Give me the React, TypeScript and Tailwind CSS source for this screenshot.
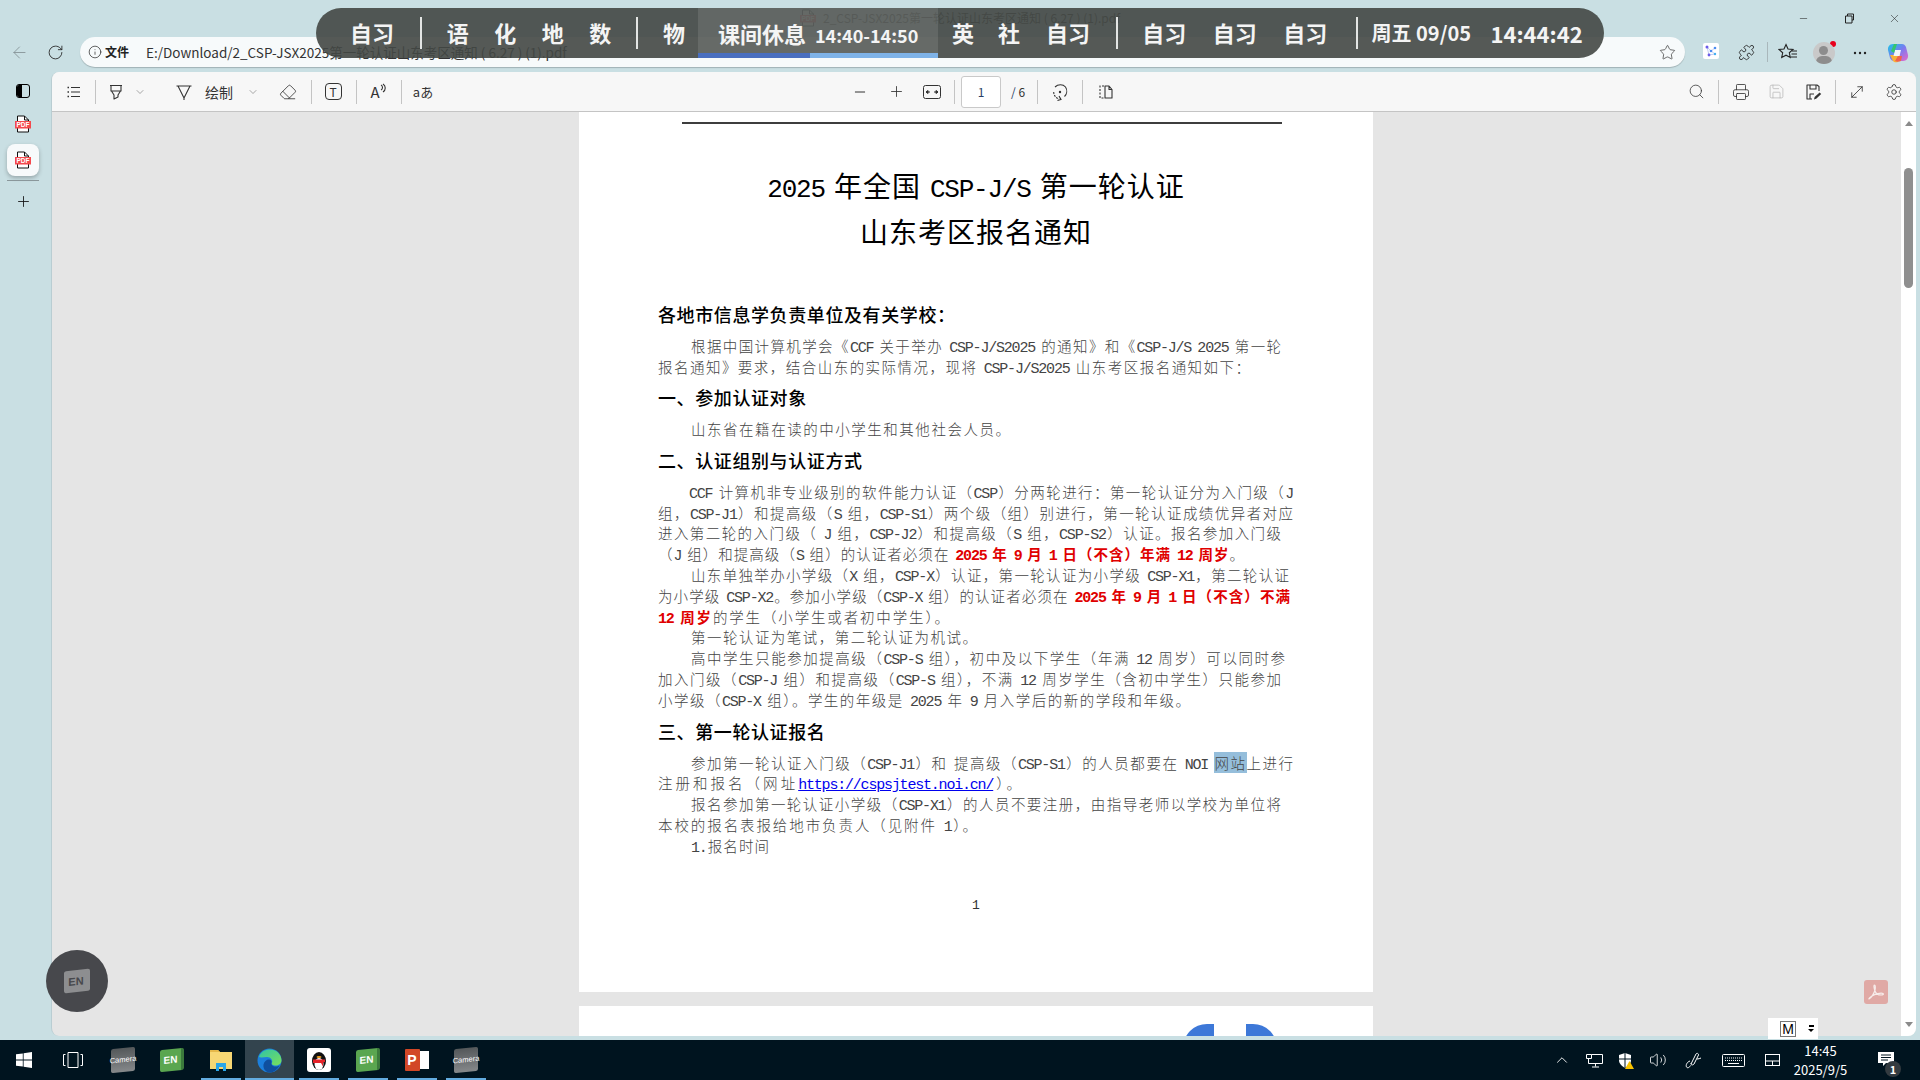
import { Children, type ReactNode } from "react";
import {
  ArrowLeft,
  ChevronDown,
  ChevronUp,
  Eraser,
  Info,
  Minus,
  MoveDiagonal,
  Plus,
  Printer,
  Puzzle,
  RotateCw,
  Save,
  Search,
  Settings,
  Star,
  Volume2,
  X,
} from "lucide-react";

const LATIN = /([\x20-\x7e]+)/;

function split(text: string) {
  return text.split(LATIN).map((part, i) =>
    i % 2 === 1 ? (
      <span
        key={i}
        className="font-['Liberation_Mono','Noto_Sans_CJK_SC',monospace] text-[15px] tracking-[-1.2px] [word-spacing:-3px]"
      >
        {part}
      </span>
    ) : (
      part
    ),
  );
}

function Ln({ x, end, children }: { x: number; end: number; children: ReactNode }) {
  // x, end are page coordinates of the line's start and end
  return (
    <div
      className="h-[20.8px] whitespace-nowrap text-[14.5px] font-light leading-[20.8px] text-[#444] [text-align-last:justify] [text-align:justify]"
      style={{ marginLeft: x - 579, width: end - x }}
    >
      {Children.map(children, (c) => (typeof c === "string" ? split(c) : c))}
    </div>
  );
}

function Red({ children }: { children: string }) {
  return <b className="font-bold text-[#e00000]">{split(children)}</b>;
}

function Heading({ className = "", children }: { className?: string; children: string }) {
  return (
    <div className={`ml-[79px] h-6 text-[18px] font-medium leading-6 tracking-[0.6px] text-black ${className}`}>
      {children}
    </div>
  );
}

function Sep({ className = "" }: { className?: string }) {
  return <div className={`h-6 w-px shrink-0 bg-[#c4c4c4] ${className}`} />;
}

function Slot({ className = "", children }: { className?: string; children: ReactNode }) {
  return <div className={`flex h-6 w-6 shrink-0 items-center justify-center text-[#333] ${className}`}>{children}</div>;
}

function Line({ d }: { d: string }) {
  return <path d={d} fill="none" stroke="currentColor" strokeWidth="1.1" strokeLinejoin="round" />;
}

function Svg({ s = 18, children }: { s?: number; children: ReactNode }) {
  return (
    <svg width={s} height={s} viewBox="0 0 18 18">
      {children}
    </svg>
  );
}

function PdfIcon() {
  return (
    <svg width="16" height="18" viewBox="0 0 16 18">
      <path d="M2.500 1h7L13.500 5v12h-11z" fill="#fff" stroke="#111" strokeWidth="1" />
      <path d="M9.500 1v4h4" fill="none" stroke="#111" strokeWidth="1" />
      <rect y="6" width="16" height="7.500" fill="#f4494d" />
      <text x="8" y="12.400" fontSize="6.500" fontWeight="700" fill="#fff" textAnchor="middle" fontFamily="Liberation Sans">
        PDF
      </text>
    </svg>
  );
}

function Rail() {
  return (
    <div className="flex w-[51px] shrink-0 flex-col items-center">
      <div className="mr-[5px] mt-[11px] flex h-4 items-center">
        <div className="flex h-[14px] w-[14px] overflow-hidden rounded-[3px] border border-black">
          <div className="w-[5px] bg-black" />
        </div>
      </div>
      <div className="mr-[5px] mt-4">
        <PdfIcon />
      </div>
      <div className="mr-[5px] mt-[11px] flex h-8 w-8 items-center justify-center rounded-lg bg-[#f7fafb] shadow-[0_2px_4px_rgba(0,0,0,0.25)]">
        <PdfIcon />
      </div>
      <div className="mr-[5px] mt-1 h-px w-8 bg-[#8a979b]" />
      <Plus size={17} strokeWidth={1.2} className="mr-[5px] mt-3 text-[#111]" />
    </div>
  );
}

function Toolbar() {
  return (
    <div className="flex h-10 shrink-0 items-center border-b border-[#c4c4c4] bg-[#f7f7f7] pl-[10px] pr-[10px]">
      <Slot>
        <Svg>
          <Line d="M6 4.500h9M6 9h9M6 13.500h9" />
          <path d="M2.500 4.500h1.500M2.500 9h1.500M2.500 13.500h1.500" stroke="currentColor" strokeWidth="1.500" />
        </Svg>
      </Slot>
      <Sep className="ml-[9px]" />
      <Slot className="ml-2">
        <Svg>
          <Line d="M3 2.500h12M4 2.500v5.500h10V2.500M4.500 8l2.500 4v4l4-2v-2l2.500-4" />
        </Svg>
      </Slot>
      <ChevronDown size={12} strokeWidth={1} className="ml-[6px] mr-[2px] text-[#555]" />
      <Slot className="ml-6">
        <Svg>
          <Line d="M1.500 3h15M3 3l6 12 6-12M9 15v2" />
        </Svg>
      </Slot>
      <span className="ml-[9px] w-7 text-[14px] leading-none text-[#333]">绘制</span>
      <ChevronDown size={12} strokeWidth={1} className="ml-[14px] mr-[2px] text-[#555]" />
      <Slot className="ml-[15px]">
        <Eraser size={18} strokeWidth={1.1} />
      </Slot>
      <Sep className="ml-[11px]" />
      <Slot className="ml-[9px]">
        <div className="flex h-[17px] w-[17px] items-center justify-center rounded-[4px] border border-[#333] text-[12px] leading-none">
          T
        </div>
      </Slot>
      <Sep className="ml-[11px]" />
      <Slot className="ml-[9px]">
        <span className="text-[15px] leading-none">A</span>
        <svg width="6" height="10" viewBox="0 0 6 10" className="-mt-2">
          <Line d="M1 2c2 1 2 4 0 5M3 1c3 2 3 6 0 8" />
        </svg>
      </Slot>
      <Sep className="ml-[11px]" />
      <Slot className="ml-[9px]">
        <span className="text-[13px] leading-none">aあ</span>
      </Slot>

      <Slot className="ml-[413px] text-[#8a8a8a]">
        <Minus size={16} strokeWidth={1.500} />
      </Slot>
      <Slot className="ml-3">
        <Plus size={17} strokeWidth={1.2} />
      </Slot>
      <Slot className="ml-3">
        <svg width="18" height="14" viewBox="0 0 18 14" fill="none" stroke="currentColor">
          <rect x=".5" y=".5" width="17" height="13" rx="2" />
          <path d="M3 7h4M11 7h4" />
          <path d="M3 7l2-1.500v3zM15 7l-2-1.500v3z" fill="currentColor" />
        </svg>
      </Slot>
      <Sep className="ml-[10px]" />
      <div className="ml-[6px] flex h-8 w-10 shrink-0 items-center justify-center rounded-[3px] border border-[#c9c9c9] bg-white text-[12px] text-[#2a3f66]">
        1
      </div>
      <span className="ml-[10px] w-4 whitespace-nowrap text-[12px] text-[#333]">
        <span className="text-[#2a3f66]">/</span> 6
      </span>
      <Sep className="ml-[10px]" />
      <Slot className="ml-[10px]">
        <svg width="18" height="18" viewBox="0 0 18 18" fill="none" stroke="currentColor" strokeWidth="1.1">
          <path d="M4 4c3-3 8-3 10.500 0 2 3 1.500 7-1 9.500" />
          <path d="M2.700 9c0 3 2 6 5.500 7" strokeDasharray="2 1" />
          <path d="M8 13l2 3.500-3.500 1" />
          <circle cx="9" cy="9" r="1.200" fill="currentColor" stroke="none" />
        </svg>
      </Slot>
      <Sep className="ml-[10px]" />
      <Slot className="ml-[10px]">
        <Svg>
          <path d="M8 3H4v12h4" fill="none" stroke="currentColor" strokeWidth="1.1" strokeDasharray="2 1.500" />
          <Line d="M9 3h4l3 3.500V15H9zM13 3v3.500h3" />
        </Svg>
      </Slot>

      <Slot className="ml-auto">
        <Search size={17} strokeWidth={1.1} />
      </Slot>
      <Sep className="ml-[10px]" />
      <Slot className="ml-[10px]">
        <Printer size={18} strokeWidth={1.1} />
      </Slot>
      <Slot className="ml-[11px] text-[#b8b8b8]">
        <Save size={17} strokeWidth={1.1} />
      </Slot>
      <Slot className="ml-[13px]">
        <Svg>
          <Line d="M15 8V3.500L13 2H3v14h5M6 2v4h6V2M6 16v-5h4" />
          <path d="M10 16.500l.6-2.500 5-4.500 1.600 1.600-5 4.600z" fill="currentColor" />
        </Svg>
      </Slot>
      <Sep className="ml-[10px]" />
      <Slot className="ml-[9px]">
        <MoveDiagonal size={18} strokeWidth={1.1} />
      </Slot>
      <Slot className="ml-[13px]">
        <Settings size={18} strokeWidth={1.1} />
      </Slot>
    </div>
  );
}

function PdfPage() {
  return (
    <div className="h-[880px] w-[794px] shrink-0 bg-white pt-[10px] font-['Noto_Sans_CJK_SC',sans-serif]">
      <div className="ml-[103px] h-[2px] w-[600px] bg-[#3d3d3d]" />
      <div className="mt-[38px] h-[46px] text-center text-[28px] leading-[46px] tracking-[1px] text-black">
        <span className="mr-[9px] font-['Liberation_Mono',monospace] text-[26px] tracking-[-1.200px]">2025</span>年全国
        <span className="mx-[9px] font-['Liberation_Mono',monospace] text-[26px] tracking-[-1.200px]">CSP-J/S</span>第一轮认证
      </div>
      <div className="h-[46px] text-center text-[28px] leading-[46px] tracking-[1px] text-black">山东考区报名通知</div>

      <Heading className="mt-12">各地市信息学负责单位及有关学校：</Heading>
      <div className="mt-[10px]">
        <Ln x={691} end={1281}>根据中国计算机学会《CCF 关于举办 CSP-J/S2025 的通知》和《CSP-J/S 2025 第一轮</Ln>
        <Ln x={658} end={1250}>报名通知》要求，结合山东的实际情况，现将 CSP-J/S2025 山东考区报名通知如下：</Ln>
      </div>
      <Heading className="mt-[7px]">一、参加认证对象</Heading>
      <div className="mt-[10px]">
        <Ln x={691} end={1010}>山东省在籍在读的中小学生和其他社会人员。</Ln>
      </div>
      <Heading className="mt-[9px]">二、认证组别与认证方式</Heading>
      <div className="mt-[9.500px]">
        <Ln x={689} end={1293}>CCF 计算机非专业级别的软件能力认证（CSP）分两轮进行：第一轮认证分为入门级（J</Ln>
        <Ln x={658} end={1293}>组，CSP-J1）和提高级（S 组，CSP-S1）两个级（组）别进行，第一轮认证成绩优异者对应</Ln>
        <Ln x={658} end={1281}>进入第二轮的入门级（ J 组，CSP-J2）和提高级（S 组，CSP-S2）认证。报名参加入门级</Ln>
        <Ln x={658} end={1244}>
          （J 组）和提高级（S 组）的认证者必须在 <Red>2025 年 9 月 1 日（不含）年满 12 周岁</Red>。
        </Ln>
        <Ln x={691} end={1289}>山东单独举办小学级（X 组，CSP-X）认证，第一轮认证为小学级 CSP-X1，第二轮认证</Ln>
        <Ln x={658} end={1290}>
          为小学级 CSP-X2。参加小学级（CSP-X 组）的认证者必须在 <Red>2025 年 9 月 1 日（不含）不满</Red>
        </Ln>
        <Ln x={658} end={949}>
          <Red>12 周岁</Red>的学生（小学生或者初中学生）。
        </Ln>
        <Ln x={691} end={977}>第一轮认证为笔试，第二轮认证为机试。</Ln>
        <Ln x={691} end={1285}>高中学生只能参加提高级（CSP-S 组），初中及以下学生（年满 12 周岁）可以同时参</Ln>
        <Ln x={658} end={1281}>加入门级（CSP-J 组）和提高级（CSP-S 组），不满 12 周岁学生（含初中学生）只能参加</Ln>
        <Ln x={658} end={1190}>小学级（CSP-X 组）。学生的年级是 2025 年 9 月入学后的新的学段和年级。</Ln>
      </div>
      <Heading className="mt-2">三、第一轮认证报名</Heading>
      <div className="mt-[10px]">
        <Ln x={691} end={1293}>
          参加第一轮认证入门级（CSP-J1）和 提高级（CSP-S1）的人员都要在 NOI <span className="bg-[#95bedb]">网站</span>上进行
        </Ln>
        <Ln x={658} end={1021}>
          注册和报名（网址<a className="text-[#0000ee] underline">{split("https://cspsjtest.noi.cn/")}</a>）。
        </Ln>
        <Ln x={691} end={1281}>报名参加第一轮认证小学级（CSP-X1）的人员不要注册，由指导老师以学校为单位将</Ln>
        <Ln x={658} end={977}>本校的报名表报给地市负责人（见附件 1）。</Ln>
        <Ln x={691} end={769}>1.报名时间</Ln>
      </div>
      <div className="mt-[38px] h-[21px] text-center font-['Liberation_Mono',monospace] text-[13px] leading-[21px] text-[#333]">1</div>
    </div>
  );
}

function Scrollbar() {
  return (
    <div className="flex w-[15px] shrink-0 flex-col items-center bg-white">
      <div className="mt-[9px] h-0 w-0 border-x-[4.500px] border-b-[5px] border-x-transparent border-b-[#8a8a8a]" />
      <div className="mt-[42px] h-[120px] w-[9px] rounded-full bg-[#8f8f8f]" />
      <div className="mt-auto mb-[9px] h-0 w-0 border-x-[4.500px] border-t-[5px] border-x-transparent border-t-[#8a8a8a]" />
    </div>
  );
}

function Divider() {
  return <div className="h-8 w-[2px] shrink-0 bg-[#e3e5e4]" />;
}

function Cell({ w, className = "", children }: { w: string; className?: string; children: ReactNode }) {
  return <div className={`shrink-0 text-center ${w} ${className}`}>{children}</div>;
}

function Schedule() {
  return (
    <div className="absolute left-[316px] top-2 flex h-[50px] w-[1288px] items-center overflow-hidden rounded-[25px] bg-[#434744]/90 text-[22px] font-bold leading-none text-[#f4f4f4]">
      <Cell w="w-[104px]" className="pb-[2px] pl-2">自习</Cell>
      <Divider />
      <Cell w="w-[47.500px]" className="ml-3 pb-[2px]">语</Cell>
      <Cell w="w-[47.500px]" className="pb-[2px]">化</Cell>
      <Cell w="w-[47.500px]" className="pb-[2px]">地</Cell>
      <Cell w="w-[47.500px]" className="pb-[2px]">数</Cell>
      <div className="w-3 shrink-0" />
      <Divider />
      <Cell w="w-[60px]" className="pb-[2px] pl-3">物</Cell>
      <div className="relative flex h-full w-[240px] shrink-0 items-center bg-[#fff]/10 pl-5">
        <span className="w-[97px]">课间休息</span>
        <span className="mt-[3px] text-[18px]">14:40-14:50</span>
        <div className="absolute bottom-0 left-0 flex h-[5px] w-full">
          <div className="w-[112px] bg-[#4a6fc0]" />
          <div className="flex-1 bg-[#7fb3e8]" />
        </div>
      </div>
      <Cell w="w-[50px]" className="pb-[2px]">英</Cell>
      <Cell w="w-[42px]" className="pb-[2px]">社</Cell>
      <Cell w="w-[76px]" className="pb-[2px]">自习</Cell>
      <div className="w-[10px] shrink-0" />
      <Divider />
      <div className="w-[11px] shrink-0" />
      <Cell w="w-[70.500px]" className="pb-[2px]">自习</Cell>
      <Cell w="w-[70.500px]" className="pb-[2px]">自习</Cell>
      <Cell w="w-[70.500px]" className="pb-[2px]">自习</Cell>
      <div className="w-[15px] shrink-0" />
      <Divider />
      <span className="ml-[14px] w-[119px] whitespace-nowrap text-[20px]">周五 09/05</span>
      <span className="text-[22px]">14:44:42</span>
    </div>
  );
}

function BrowserTop() {
  return (
    <>
      <div className="flex h-9 items-center">
        <div className="ml-[800px] opacity-70">
          <PdfIcon />
        </div>
        <span className="ml-[7px] whitespace-nowrap text-[12px] text-[#555]">2_CSP-JSX2025第一轮认证山东考区通知 ( 6.27 ) (1).pdf</span>
        <div className="ml-auto flex items-center text-[#222]">
          <Minus size={11} strokeWidth={1.2} />
          <svg width="11" height="11" viewBox="0 0 11 11" className="ml-[35px]">
            <path d="M1.500 3h6.500v7H1.500zM3.500 3V1h6v6H8" fill="none" stroke="currentColor" />
          </svg>
          <X size={13} strokeWidth={1} className="ml-[33px] mr-[19px]" />
        </div>
      </div>
      <div className="flex h-9 items-start">
        <ArrowLeft size={19} strokeWidth={1} className="ml-[10px] mt-[7px] shrink-0 text-[#7d8a8e]" />
        <RotateCw size={17} strokeWidth={1.2} className="ml-[18px] mt-[8px] shrink-0 text-[#222]" />
        <div className="ml-[16px] mt-[1px] flex h-[30px] w-[1605px] shrink-0 items-center rounded-full bg-[#f7fafb] shadow-[0_1px_1px_rgba(0,0,0,0.2)]">
          <Info size={14} strokeWidth={1.2} className="ml-[8px] text-[#222]" />
          <span className="ml-[3px] text-[12px] font-bold text-[#222]">文件</span>
          <span className="ml-[17px] whitespace-nowrap text-[13.500px] text-[#333]">E:/Download/2_CSP-JSX2025第一轮认证山东考区通知 ( 6.27 ) (1).pdf</span>
          <Star size={17} strokeWidth={1} className="ml-auto mr-[9px] text-[#333]" />
        </div>
        <div className="ml-[18px] mt-[7px] flex h-4 w-4 shrink-0 items-center justify-center rounded-[2px] bg-white">
          <svg width="14" height="14" viewBox="0 0 14 14">
            <path d="M3 3l4 4 4-3M3 3l2 8 6-1M7 7l4 3" fill="none" stroke="#a9b8ef" strokeWidth=".7" />
            <circle cx="3" cy="3" r="1.500" fill="#6a5be8" />
            <circle cx="11" cy="4" r="1.300" fill="#4b8cf0" />
            <circle cx="7" cy="7" r="1.300" fill="#4b8cf0" />
            <circle cx="5" cy="11" r="1.400" fill="#6a5be8" />
            <circle cx="11" cy="10" r="1.200" fill="#43b0f0" />
          </svg>
        </div>
        <Puzzle size={17} strokeWidth={1.2} className="ml-[19px] mt-[8px] shrink-0 text-[#222]" />
        <div className="ml-[12px] mt-[6px] h-5 w-px shrink-0 bg-[#a9b7bb]" />
        <svg width="20" height="18" viewBox="0 0 20 18" className="ml-[10px] mt-[7px] shrink-0 text-[#222]">
          <path d="M8 1.500l2 4.500 5 .5-3.700 3.300 1 4.700L8 12.200 3.700 14.500l1-4.700L1 6.500l5-.5z" fill="none" stroke="currentColor" strokeWidth="1.1" />
          <path d="M14 8h5M13.500 11h5.500M13 14h6" stroke="currentColor" strokeWidth="1" />
        </svg>
        <div className="relative ml-[15px] mt-[6px] h-[22px] w-[22px] shrink-0 overflow-hidden rounded-full bg-[#c9c9c9]">
          <div className="absolute left-[6px] top-[4px] h-[9px] w-[9px] rounded-full bg-[#8d8d8d]" />
          <div className="absolute left-[3px] top-[14px] h-[12px] w-4 rounded-full bg-[#8d8d8d]" />
        </div>
        <div className="-ml-[5px] mt-[5px] h-[6px] w-[6px] shrink-0 rounded-full bg-[#e8001c]" />
        <svg width="14" height="4" viewBox="0 0 14 4" className="ml-[17px] mt-[15px] shrink-0 text-[#222]">
          <circle cx="2" cy="2" r="1.200" fill="currentColor" />
          <circle cx="7" cy="2" r="1.200" fill="currentColor" />
          <circle cx="12" cy="2" r="1.200" fill="currentColor" />
        </svg>
        <svg width="24" height="24" viewBox="0 0 24 24" className="ml-[19px] mt-[5px] shrink-0">
          <defs>
            <linearGradient id="cop" x1="0" y1="0" x2="1" y2="1">
              <stop offset="0" stopColor="#19c6e6" />
              <stop offset=".5" stopColor="#7a7bf0" />
              <stop offset="1" stopColor="#e868c8" />
            </linearGradient>
          </defs>
          <path d="M7 3h9c2 0 3 1 4 3l2 8c.500 3-1.500 6-5 6h-9c-2 0-3-1-4-3L2 9C1.500 6 3.500 3 7 3z" fill="url(#cop)" />
          <path d="M4 14l3 6c1 1.500 3 1.500 5 1l2-7H7z" fill="#f7b23b" />
          <path d="M9 20c2 1 4 1 6 0l1-5h-4z" fill="#f0624d" />
          <path d="M9 9h6l-1.500 6h-6z" fill="#f2f6fb" />
          <path d="M5 10L8 3h3L8 12z" fill="#34c66e" />
        </svg>
      </div>
    </>
  );
}

function TaskApp({ active, on, children }: { active?: boolean; on?: boolean; children: ReactNode }) {
  return (
    <div className={`relative flex h-10 w-[49px] shrink-0 items-center justify-center ${active ? "bg-[#33444e]" : ""}`}>
      {children}
      {on ? <div className={`absolute bottom-0 h-[2px] bg-[#63ace0] ${active ? "inset-x-0" : "inset-x-[4.500px]"}`} /> : null}
    </div>
  );
}

function CameraIcon() {
  return (
    <div className="flex h-6 w-6 -skew-y-6 items-center justify-center rounded-[2px] bg-gradient-to-b from-[#54585a] to-[#86898b] font-['Liberation_Sans',sans-serif] text-[7.500px] leading-none text-white">
      Camera
    </div>
  );
}

function EnIcon() {
  return (
    <div className="flex h-[22px] w-6 -skew-y-6 items-center justify-center rounded-[2px] border-r-[3px] border-[#3b7a3c] bg-[#5aa650] font-['Liberation_Sans',sans-serif] text-[10px] font-bold leading-none text-white">
      EN
    </div>
  );
}

function Tray({ className = "", children }: { className?: string; children: ReactNode }) {
  return <div className={`flex h-10 shrink-0 items-center justify-center text-white ${className}`}>{children}</div>;
}

function Taskbar() {
  return (
    <div className="flex h-10 shrink-0 items-center bg-[#00141f]">
      <div className="flex h-10 w-[48px] shrink-0 items-center justify-center">
        <svg width="16" height="16" viewBox="0 0 16 16" fill="#fff">
          <path d="M0 2.300l6.800-.9v6.200H0zM7.600 1.300L16 0v7.600H7.600zM0 8.400h6.800v6.200L0 13.700zM7.600 8.400H16V16l-8.400-1.200z" />
        </svg>
      </div>
      <div className="flex h-10 w-[50px] shrink-0 items-center justify-center">
        <svg width="20" height="16" viewBox="0 0 20 16" fill="none" stroke="#fff">
          <path d="M5 .5h10v15H5zM2.500 2.500H.5v11h2M17.500 2.500h2v11h-2" />
        </svg>
      </div>
      <TaskApp><CameraIcon /></TaskApp>
      <TaskApp><EnIcon /></TaskApp>
      <TaskApp on>
        <svg width="22" height="22" viewBox="0 0 22 22">
          <path d="M0 1h8l2 2h12v17H0z" fill="#f7d774" />
          <path d="M0 1h8l2 2H0z" fill="#e6b94a" />
          <path d="M6 14h10v8h-3v-4h-4v4H6z" fill="#2ba5e8" />
        </svg>
      </TaskApp>
      <TaskApp active on>
        <svg width="25" height="25" viewBox="0 0 25 25">
          <defs>
            <linearGradient id="edge" x1="0" y1="0" x2="1" y2="1">
              <stop offset="0" stopColor="#2fc4a8" />
              <stop offset="1" stopColor="#7ae05a" />
            </linearGradient>
          </defs>
          <circle cx="12.500" cy="12.500" r="12" fill="#1c7fdc" />
          <path d="M2 9C4 2 12 0 18 2.500c4 2 6.500 6 6.500 10 0 3-3 5-6 5-2 0-5-1-3.500-3 1-2-1-5.500-5-5.500-3 0-6 1-8 0z" fill="url(#edge)" />
          <path d="M12 24.500c-4-1-6-4-5.500-8 .5-3 3-5 5.500-5 2 0 3 1.500 2.500 3-.5 2 1 4 4 4 2 0 3-.5 4-1-2 4-6 7.500-10.500 7z" fill="#0f4f9e" />
        </svg>
      </TaskApp>
      <TaskApp on>
        <div className="flex h-6 w-6 items-center justify-center rounded-[3px] bg-white">
          <svg width="18" height="22" viewBox="0 0 18 22">
            <ellipse cx="9" cy="12" rx="7" ry="9" fill="#111" />
            <ellipse cx="9" cy="15" rx="4.500" ry="6" fill="#fff" />
            <ellipse cx="9" cy="8" rx="2.500" ry="1" fill="#f5a623" />
            <path d="M3 10.500h12v2.500l-2 .5v4l-2-3.500H3z" fill="#e5232a" />
          </svg>
        </div>
      </TaskApp>
      <TaskApp on><EnIcon /></TaskApp>
      <TaskApp on>
        <div className="relative h-[22px] w-6">
          <div className="absolute right-0 top-[2px] h-[18px] w-4 bg-white" />
          <div className="absolute left-0 top-0 flex h-[22px] w-[15px] items-center justify-center rounded-[1px] bg-[#d24726] font-['Liberation_Sans',sans-serif] text-[14px] font-bold leading-none text-white">
            P
          </div>
        </div>
      </TaskApp>
      <TaskApp on><CameraIcon /></TaskApp>

      <Tray className="ml-[1062px] w-5"><ChevronUp size={18} strokeWidth={1.2} /></Tray>
      <Tray className="ml-3 w-5">
        <svg width="17" height="15" viewBox="0 0 17 15" fill="none" stroke="#fff">
          <path d="M.5 1.500h5v4h-5zM5.500 1.500h11v9H2.500V5.500M9.500 10.500v3M6 14h7" />
        </svg>
      </Tray>
      <Tray className="ml-3 w-5">
        <svg width="16" height="17" viewBox="0 0 16 17">
          <path d="M7 1l6 2v5c0 4-3 6-6 8-3-2-6-4-6-8V3z" fill="#fff" />
          <path d="M7 1v15M1 7h12" stroke="#00141f" />
          <path d="M11.500 9l4.500 8H7z" fill="#f8c200" />
        </svg>
      </Tray>
      <Tray className="ml-3 w-5"><Volume2 size={18} strokeWidth={1.1} /></Tray>
      <Tray className="ml-[15px] w-5">
        <svg width="17" height="17" viewBox="0 0 17 17" fill="none" stroke="#fff">
          <path d="M6 12L11 2c1-1.500 3 0 2.500 1L9 12c-1 1.500-3.500 1-3-.5zM5 9C2 10 .5 13 1.500 15c1 1.500 3 .5 4-1.500M12 7c1.500 0 3-.5 4-1" />
        </svg>
      </Tray>
      <Tray className="ml-[18px] w-6">
        <svg width="23" height="13" viewBox="0 0 23 13" fill="none" stroke="#fff">
          <rect x=".5" y=".5" width="22" height="12" rx="1" />
          <path d="M3 4h17M3 6.500h17" strokeDasharray="1 1" />
          <path d="M6 9.500h11" />
        </svg>
      </Tray>
      <Tray className="ml-5 w-[15px]">
        <svg width="15" height="12" viewBox="0 0 15 12" fill="none" stroke="#fff">
          <rect x=".5" y=".5" width="14" height="11" />
          <path d="M.5 7h14M7.500 7v4.500" />
        </svg>
      </Tray>
      <div className="ml-3 w-[57px] shrink-0 text-center text-[13px] leading-[19px] text-white">
        <div>14:45</div>
        <div>2025/9/5</div>
      </div>
      <div className="relative ml-7 h-10 w-6 shrink-0">
        <svg width="16" height="15" viewBox="0 0 16 15" className="absolute left-[1px] top-[12px]">
          <path d="M0 0h16v11H8l-3 3v-3H0z" fill="#fff" />
          <path d="M3 3h10M3 5.500h10M3 8h7" stroke="#00141f" />
        </svg>
        <div className="absolute left-[8px] top-[21px] flex h-4 w-4 items-center justify-center rounded-full bg-[#333b40] text-[11px] font-bold leading-none text-white">
          1
        </div>
      </div>
    </div>
  );
}

export default function App() {
  return (
    <div className="relative flex h-[1080px] w-[1920px] flex-col overflow-hidden bg-[#c9dfe3] font-['Noto_Sans_CJK_SC',sans-serif]">
      <BrowserTop />
      <div className="flex h-[968px] shrink-0">
        <Rail />
        <div className="flex h-[964px] w-[1865px] shrink-0 flex-col overflow-hidden rounded-lg border-l border-[#b9cdd2] bg-[#e5e5e5]">
          <Toolbar />
          <div className="flex min-h-0 flex-1">
            <div className="min-w-0 flex-1 overflow-hidden pl-[527px]">
              <PdfPage />
              <div className="mt-[14px] flex h-[40px] w-[794px] bg-white pl-[604px] pt-[18px]">
                <div className="h-[30px] w-[31px] rounded-tl-[24px] bg-[#3d78d8]" />
                <div className="ml-[32px] h-[30px] w-[31px] rounded-tr-[24px] bg-[#3d78d8]" />
              </div>
            </div>
            <Scrollbar />
          </div>
        </div>
      </div>
      <Taskbar />

      <Schedule />

      <div className="absolute left-[46px] top-[950px] flex h-[62px] w-[62px] items-center justify-center rounded-full bg-[#47484c]">
        <div className="flex h-[22px] w-[26px] -skew-y-6 items-center justify-center rounded-[2px] border-r-2 border-[#8d8e90] bg-[#8d8e90] font-['Liberation_Sans',sans-serif] text-[11px] font-bold text-[#47484c]">
          EN
        </div>
      </div>
      <div className="absolute left-[1864px] top-[980px] flex h-6 w-6 items-center justify-center rounded-[3px] bg-[#e0a9a5]">
        <svg width="18" height="18" viewBox="0 0 18 18" fill="none" stroke="#f7ecea" strokeWidth="1.2">
          <path d="M2 16c2-1 5-5 6-9 .5-2 .5-5-.5-5S7 5 8 8c1 3 4 4 6 4s3-1 2-1.500c-2-1-8 .5-11 2.500-2 1.300-3.500 3-3 3z" />
        </svg>
      </div>
      <div className="absolute left-[1768px] top-[1018px] flex h-[21px] w-[50px] items-center bg-white pl-[12px]">
        <div className="flex h-4 w-4 items-center justify-center border border-[#777] font-['Liberation_Sans',sans-serif] text-[14px] leading-none text-black">
          M
        </div>
        <div className="ml-[12px] flex flex-col items-center gap-[2px]">
          <div className="h-[2px] w-[5px] bg-black" />
          <div className="h-0 w-0 border-x-[3px] border-t-[3px] border-x-transparent border-t-black" />
        </div>
      </div>
    </div>
  );
}
